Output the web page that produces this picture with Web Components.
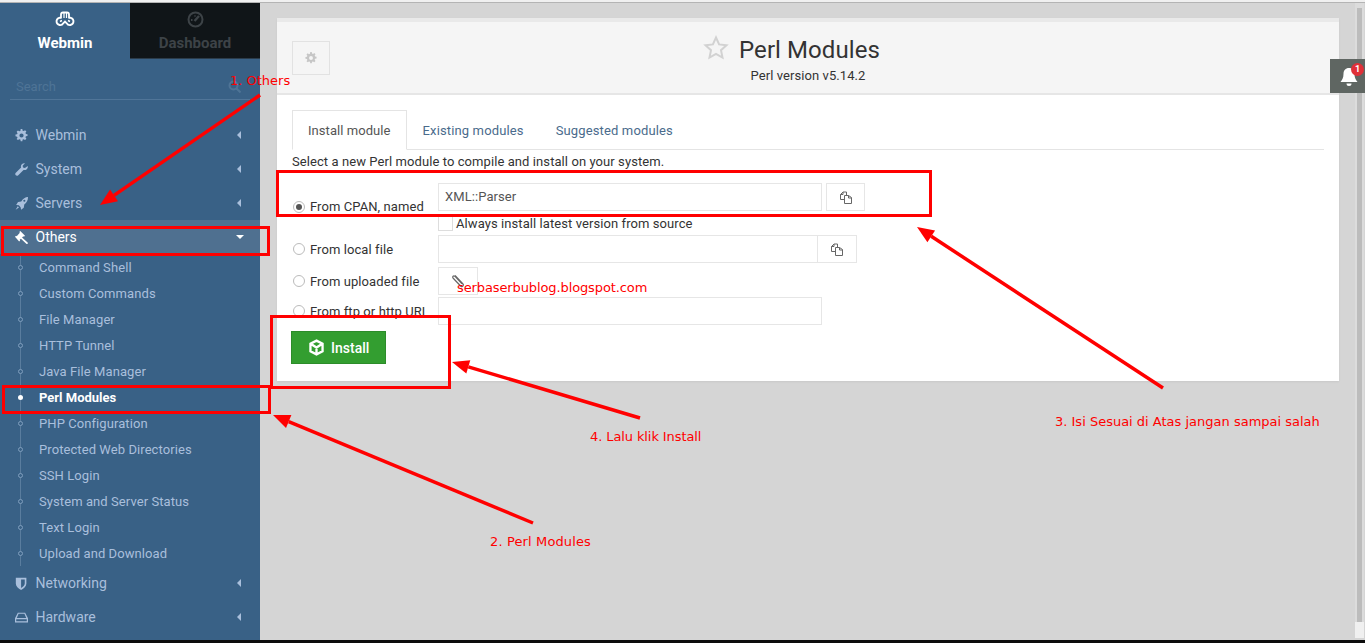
<!DOCTYPE html>
<html>
<head>
<meta charset="utf-8">
<title>Perl Modules</title>
<style>
  html, body { margin: 0; height: 100%; overflow: hidden; }
  body { font-family: Roboto, "Liberation Sans", sans-serif; background: #d5d5d5; }
</style>
</head>
<body>
<wm-app>
  <wm-sidebar slot="side">
    <wm-nav label="Webmin" icon="cog"></wm-nav>
    <wm-nav label="System" icon="wrench"></wm-nav>
    <wm-nav label="Servers" icon="rocket"></wm-nav>
    <wm-nav label="Others" icon="gavel" open></wm-nav>
    <wm-sub-list>
      <wm-sub>Command Shell</wm-sub>
      <wm-sub>Custom Commands</wm-sub>
      <wm-sub>File Manager</wm-sub>
      <wm-sub>HTTP Tunnel</wm-sub>
      <wm-sub>Java File Manager</wm-sub>
      <wm-sub active>Perl Modules</wm-sub>
      <wm-sub>PHP Configuration</wm-sub>
      <wm-sub>Protected Web Directories</wm-sub>
      <wm-sub>SSH Login</wm-sub>
      <wm-sub>System and Server Status</wm-sub>
      <wm-sub>Text Login</wm-sub>
      <wm-sub>Upload and Download</wm-sub>
    </wm-sub-list>
    <wm-nav label="Networking" icon="shield"></wm-nav>
    <wm-nav label="Hardware" icon="hdd"></wm-nav>
  </wm-sidebar>
  <wm-panel slot="main" title="Perl Modules" subtitle="Perl version v5.14.2">
    <wm-tabs></wm-tabs>
    <wm-install-form></wm-install-form>
  </wm-panel>
</wm-app>
<wm-notify></wm-notify>
<wm-annotations></wm-annotations>

<script>
const ICONS = {
  cog: '<path d="M7 0h2l.4 2 1.300.500L12.400 1.400 14 3l-1.100 1.700.500 1.300 2 .400v2.200l-2 .400-.500 1.300 1.100 1.700-1.600 1.600-1.700-1.100-1.300.500-.400 2H7l-.400-2-1.300-.500-1.700 1.100L2 12.400l1.100-1.700-.500-1.300-2-.400V6.800l2-.400.500-1.300L2 3.400 3.600 1.800l1.700 1.100L6.600 2.400zM8 5.400a2.600 2.600 0 1 0 0 5.200 2.600 2.600 0 0 0 0-5.200z" fill-rule="evenodd"/>',
  wrench: '<path d="M15.700 3.600c.300 1.600-.100 3-1.200 4-1.100 1-2.600 1.300-4 .900L4 15c-.800.800-2.200.900-3 .100-.900-.900-.900-2.300 0-3.100l6.500-6.400c-.500-1.400-.200-3 .900-4.100 1-1 2.500-1.400 3.900-1.100L9.400 3.300l.500 2.300 2.300.600z"/>',
  rocket: '<path d="M16 0c.100 3.800-1.300 6.900-4.600 9.300l-.600 4-3.300 2.300-.600-3.100-2.200-2.200-3.300-.600L3.700 6.100l4-.600C10 2 12.600.200 16 0zM11.500 3.300a1.300 1.300 0 1 0 0 2.600 1.300 1.300 0 0 0 0-2.600zM3.400 11.500l1.500 1.500L.800 15.600z" fill-rule="evenodd"/>',
  gavel: '<path d="M6.500 0l5.800 5.800-1.300 1.300-.800-.600-1.500 1.500L15.500 14c.500.500.500 1.200 0 1.600-.400.500-1.100.500-1.600 0L7.300 9.400 5.800 10.900l.600.800-1.300 1.300L0 7.200l1.300-1.300.800.600L6 2.100l-.700-.800z"/>',
  shield: '<path d="M1 1h13v7c0 3.500-3 6-6.500 8C4 14 1 11.500 1 8zM7.500 3v10.500C9.800 12 12 10.300 12 8V3z" fill-rule="evenodd"/>',
  hdd: '<path d="M3.500 2h9L16 9v5H0V9zM4.400 3.500L2.200 8.500h11.600l-2.200-5zM1.500 10v2.500h13V10z" fill-rule="evenodd"/>'
};

function svg(name, size) {
  return `<svg viewBox="0 0 16 16" width="${size}" height="${size}" fill="currentColor">${ICONS[name]}</svg>`;
}

class WmApp extends HTMLElement {
  constructor() {
    super();
    this.attachShadow({ mode: 'open' }).innerHTML = `
      <style>
        :host { display: flex; flex-direction: column; height: 643px; width: 1365px; background: #d5d5d5; }
        .top { height: 2px; background: #f0f0f0; border-bottom: 1px solid #b4b4b4; flex: none; }
        .body { flex: 1; display: flex; min-height: 0; }
        .bottom { height: 3px; background: #0c0c0c; flex: none; }
        .main { flex: 1; padding: 15px 16px 0 17px; min-width: 0; }
        .track { flex: none; width: 5px; margin: 0 1px 2px 0; padding: 0 2px; background: #dcdcdc; display: flex; flex-direction: column; }
        .thumb { flex: 1; background: #bcbcbc; margin-top: 5px; }
        .cap { height: 16px; margin: 0 -2px; background: #f0f0f0; }
      </style>
      <div class="top"></div>
      <div class="body">
        <slot name="side"></slot>
        <div class="main"><slot name="main"></slot></div>
        <div class="track"><div class="thumb"></div><div class="cap"></div></div>
      </div>
      <div class="bottom"></div>`;
  }
}

class WmSidebar extends HTMLElement {
  constructor() {
    super();
    this.attachShadow({ mode: 'open' }).innerHTML = `
      <style>
        :host { display: block; width: 260px; flex: none; background: #396186; color: #a9bfdc; overflow: hidden; }
        .tabs { display: grid; grid-template-columns: 130px 130px; height: 56px; font-size: 15px; font-weight: 700; text-align: center; }
        .tab { display: flex; flex-direction: column; align-items: center; padding-top: 8px; gap: 6px; box-sizing: border-box; }
        .tab.on { color: #fff; }
        .tab.off { background: #101518; color: #3d4347; border-bottom: 1px solid #2b3c4b; }
        .tab svg { display: block; }
        .search { display: flex; align-items: center; justify-content: space-between; margin: 15px 10px 0; height: 25px; padding: 0 9px 0 6px; border-bottom: 1px solid #507598; font-size: 13px; color: #4f7496; }
        nav { padding-top: 18px; }
      </style>
      <div class="tabs">
        <div class="tab on">
          <svg width="20" height="17" viewBox="0 0 20 17" fill="none" stroke="currentColor" stroke-width="1.800">
            <path d="M6 7.500V3.500Q6 1.500 8 1.500H12Q14 1.500 14 3.500V7.500"/>
            <path d="M9 2v5M11.500 2v5" stroke-width="1.200"/>
            <path d="M6 6.500Q2 6.800 1.500 10Q1.500 13.500 4.500 14Q7 14.500 8.500 12L10 10.500L11.500 12Q13 14.500 15.500 14Q18.500 13.500 18.500 10Q18 6.800 14 6.500"/>
            <path d="M5 10.500L7 9.500M15 10.500L13 9.500" stroke-width="1.400"/>
          </svg>
          <span>Webmin</span>
        </div>
        <div class="tab off">
          <svg width="17" height="17" viewBox="0 0 17 17" fill="none" stroke="currentColor" stroke-width="2"><circle cx="8.500" cy="8.500" r="7"/><path d="M7.500 10l4.500-5" stroke-width="2.400"/><path d="M4 9h1.500M8 4.500v1" /></svg>
          <span>Dashboard</span>
        </div>
      </div>
      <div class="search">
        <span>Search</span>
        <svg width="13" height="13" viewBox="0 0 13 13" fill="none" stroke="currentColor" stroke-width="2"><circle cx="5.500" cy="5.500" r="4"/><path d="M8.500 8.500l4 4"/></svg>
      </div>
      <nav><slot></slot></nav>`;
  }
}

class WmNav extends HTMLElement {
  constructor() {
    super();
    const open = this.hasAttribute('open');
    this.attachShadow({ mode: 'open' }).innerHTML = `
      <style>
        :host { display: flex; align-items: center; height: 34px; padding: 0 16px 0 15px; font-size: 14px; box-sizing: border-box; }
        :host([open]) { background: #4f7090; color: #fff; }
        .ic { width: 20.500px; display: flex; }
        .label { flex: 1; }
        .caret { width: 0; height: 0; }
        .left { border-top: 4px solid transparent; border-bottom: 4px solid transparent; border-right: 4px solid currentColor; margin-right: 3px; }
        .down { border-left: 4px solid transparent; border-right: 4px solid transparent; border-top: 4px solid currentColor; }
      </style>
      <span class="ic">${svg(this.getAttribute('icon'), 13)}</span>
      <span class="label">${this.getAttribute('label')}</span>
      <span class="caret ${open ? 'down' : 'left'}"></span>`;
  }
}

class WmSubList extends HTMLElement {
  constructor() {
    super();
    this.attachShadow({ mode: 'open' }).innerHTML = `
      <style>
        :host { display: block; position: relative; }
        .line { position: absolute; left: 20px; top: 0; bottom: 0; width: 1px; background: #5a7d9e; }
      </style>
      <div class="line"></div><slot></slot>`;
  }
}

class WmSub extends HTMLElement {
  constructor() {
    super();
    this.attachShadow({ mode: 'open' }).innerHTML = `
      <style>
        :host { display: flex; align-items: center; position: relative; height: 26px; padding-left: 39px; font-size: 13px; letter-spacing: .08px; color: #a9bfdc; }
        :host([active]) { color: #fff; font-weight: 700; letter-spacing: 0; }
        .dot { position: absolute; left: 18px; top: 11px; width: 3px; height: 3px; border: 1px solid #7f9ebd; border-radius: 50%; background: #396186; }
        :host([active]) .dot { width: 5px; height: 5px; border: 0; background: #fff; }
      </style>
      <span class="dot"></span><slot></slot>`;
  }
}

class WmPanel extends HTMLElement {
  constructor() {
    super();
    this.attachShadow({ mode: 'open' }).innerHTML = `
      <style>
        :host { display: block; background: #fff; border-top: 4px solid #e9e9e9; height: 359px; box-shadow: 0 1px 2px rgba(0,0,0,.06); color: #333; }
        header { position: relative; height: 71px; background: #f5f5f5; border-bottom: 2px solid #e6e6e6; display: flex; flex-direction: column; align-items: center; }
        .cog { position: absolute; left: 15px; top: 19px; width: 36px; height: 32px; border: 1px solid #e2e2e2; display: flex; align-items: center; justify-content: center; color: #c6c6c6; }
        h1 { margin: 12px 0 0 3px; position: relative; font-size: 24px; line-height: 32px; font-weight: 400; letter-spacing: .08px; color: #333; }
        .star { position: absolute; left: -36px; top: 1px; color: #d2d2d2; }
        .sub { font-size: 13px; line-height: 16px; margin-top: 2px; letter-spacing: .08px; color: #333; }
        .content { padding: 15px 15px 0; }
      </style>
      <header>
        <div class="cog">${svg('cog', 12)}</div>
        <h1><svg class="star" width="26" height="25" viewBox="0 0 26 25" fill="none" stroke="currentColor" stroke-width="2"><path d="M13 2.500l3.100 6.900 7.400.800-5.500 5 1.500 7.300-6.500-3.700-6.500 3.700 1.500-7.300-5.500-5 7.400-.800z"/></svg>${this.getAttribute('title')}</h1>
        <div class="sub">${this.getAttribute('subtitle')}</div>
      </header>
      <div class="content"><slot></slot></div>`;
  }
}

class WmTabs extends HTMLElement {
  constructor() {
    super();
    this.attachShadow({ mode: 'open' }).innerHTML = `
      <style>
        :host { display: flex; height: 40px; border-bottom: 1px solid #e4e4e4; font-size: 13px; letter-spacing: .14px; box-sizing: border-box; }
        span { display: block; padding: 0 16px; line-height: 41px; color: #4a6b8c; }
        .on { color: #555; background: #fff; height: 40px; box-sizing: border-box; border: 1px solid #e4e4e4; border-bottom-color: #fff; padding: 0 15px; line-height: 39px; letter-spacing: .06px; }
      </style>
      <span class="on">Install module</span><span>Existing modules</span><span>Suggested modules</span>`;
  }
}

class WmInstallForm extends HTMLElement {
  constructor() {
    super();
    const copy = `<svg width="12" height="13" viewBox="0 0 12 13" fill="none" stroke="#666" stroke-width="1"><path d="M4.500 8.500H.500V3.500L3 1h3.500v3"/><path d="M3 1v2.500H.500"/><path d="M4.500 12.500V4.500H8.500L11.500 6.500V12.500z"/><path d="M8.500 4.500V7H11.500"/></svg>`;
    this.attachShadow({ mode: 'open' }).innerHTML = `
      <style>
        :host { display: block; font-size: 13px; letter-spacing: .08px; color: #333; }
        .intro { line-height: 16px; padding-top: 4px; height: 20px; }
        .row { display: flex; }
        .opt { width: 146px; display: flex; align-items: center; gap: 5px; padding-left: 1px; box-sizing: border-box; white-space: nowrap; overflow: visible; }
        .radio { width: 10px; height: 10px; border: 1px solid #bbb; border-radius: 50%; background: #fff; position: relative; flex: none; }
        .radio.on::after { content: ""; position: absolute; left: 2px; top: 2px; width: 6px; height: 6px; border-radius: 50%; background: #555; }
        .in { height: 28px; box-sizing: border-box; border: 1px solid #e6e6e6; padding: 0 6px; line-height: 26px; color: #555; background: #fff; }
        .btn { height: 28px; width: 39px; box-sizing: border-box; border: 1px solid #e6e6e6; display: flex; align-items: center; justify-content: center; }
        .cpan { margin-top: 9px; height: 33px; }
        .cpan .opt { padding-top: 14px; }
        .always { display: flex; align-items: center; gap: 3px; margin: 0 0 0 146px; height: 15px; line-height: 15px; }
        .box { width: 13px; height: 13px; border: 1px solid #ddd; flex: none; }
        .local { margin-top: 4px; }
        .upload { margin-top: 4px; }
        .ftp { margin-top: 2px; }
        .install { display: inline-flex; align-items: center; gap: 6px; margin-top: 6px; margin-left: -1px; height: 33px; width: 95px; box-sizing: border-box; padding-left: 16px; background: #339e30; border: 1px solid #2c8c2a; color: #fff; font-size: 14px; font-weight: 500; letter-spacing: 0; }
      </style>
      <div class="intro">Select a new Perl module to compile and install on your system.</div>
      <div class="row cpan">
        <div class="opt"><span class="radio on"></span>From CPAN, named</div>
        <div class="in" style="width:384px">XML::Parser</div>
        <div class="btn" style="margin-left:4px">${copy}</div>
      </div>
      <div class="always"><span class="box"></span>Always install latest version from source</div>
      <div class="row local">
        <div class="opt"><span class="radio"></span>From local file</div>
        <div class="in" style="width:380px"></div>
        <div class="btn" style="border-left:0">${copy}</div>
      </div>
      <div class="row upload">
        <div class="opt"><span class="radio"></span>From uploaded file</div>
        <div class="btn" style="width:40px">
          <svg width="14" height="14" viewBox="0 0 14 14" fill="none" stroke="#666" stroke-width="1.200"><path d="M4 1.500l8 8.500c1.300 1.500-.700 3.500-2.200 2.200L2 4c-1-1.200.600-2.800 1.800-1.800l7 7.300"/></svg>
        </div>
      </div>
      <div class="row ftp">
        <div class="opt"><span class="radio"></span>From ftp or http URL</div>
        <div class="in" style="width:384px"></div>
      </div>
      <div class="install">
        <svg width="17" height="17" viewBox="0 0 16 16" fill="none" stroke="#fff" stroke-width="2.200"><path d="M8 1.500l5.700 3v7L8 14.500l-5.700-3v-7zM2.500 4.500L8 8l5.500-3.500M8 8v6"/></svg>
        Install
      </div>`;
  }
}

class WmNotify extends HTMLElement {
  constructor() {
    super();
    this.attachShadow({ mode: 'open' }).innerHTML = `
      <style>
        :host { position: absolute; left: 1330px; top: 59px; width: 35px; height: 34px; background: #5f6662; display: block; }
        svg { position: absolute; left: 9px; top: 8px; }
        b { position: absolute; left: 21px; top: 4px; width: 13px; height: 13px; border-radius: 50%; background: #e03038; color: #fff; font: 700 9px/13px Roboto, sans-serif; text-align: center; }
      </style>
      <svg width="20" height="20" viewBox="0 0 20 20" fill="#fff"><path d="M10 1c-3.500 0-5.500 2.500-5.500 6 0 4-1.500 6-3 8h17c-1.500-2-3-4-3-8 0-3.500-2-6-5.500-6z"/><path d="M7.500 16.500h5a2.500 2.500 0 0 1-5 0z"/></svg>
      <b>1</b>`;
  }
}

// scribbled red markup lying over the screenshot
class WmAnnotations extends HTMLElement {
  constructor() {
    super();
    const arrow = (x1, y1, x2, y2) => {
      const a = Math.atan2(y2 - y1, x2 - x1), l = 17, w = 7;
      const bx = x2 - l * Math.cos(a), by = y2 - l * Math.sin(a);
      const nx = -Math.sin(a) * w, ny = Math.cos(a) * w;
      return `<line x1="${x1}" y1="${y1}" x2="${bx}" y2="${by}"/>
        <polygon stroke="none" fill="#f00" points="${x2},${y2} ${bx + nx},${by + ny} ${bx - nx},${by - ny}"/>`;
    };
    const notes = [
      ['1. Others', 230, 74, 0], ['2. Perl Modules', 490, 535, .13], ['3. Isi Sesuai di Atas jangan sampai salah', 1055, 415, 0],
      ['4. Lalu klik Install', 590, 430, -.1], ['serbaserbublog.blogspot.com', 457, 281, -.11]
    ];
    this.attachShadow({ mode: 'open' }).innerHTML = `
      <style>
        :host { position: absolute; inset: 0; display: block; pointer-events: none; }
        svg { position: absolute; left: 0; top: 0; }
        rect { stroke-width: 3px; }
        span { position: absolute; color: #f00; font: 13px/13px "DejaVu Sans", sans-serif; white-space: nowrap; }
      </style>
      <svg width="1365" height="643" fill="none" stroke="#f00" stroke-width="3.500">
        <rect x="2.500" y="227.500" width="266" height="27"/>
        <rect x="3.500" y="386.500" width="266" height="26"/>
        <rect x="271.500" y="316.500" width="178" height="71"/>
        <rect x="277.500" y="171.500" width="653" height="44"/>
        ${arrow(260, 95, 100, 205)}
        ${arrow(533, 523, 273, 415)}
        ${arrow(1163, 388, 917, 227)}
        ${arrow(640, 418, 452, 362)}
      </svg>
      ${notes.map(([t, x, y, s]) => `<span style="left:${x}px;top:${y}px;letter-spacing:${s}px">${t}</span>`).join('')}`;
  }
}

customElements.define('wm-app', WmApp);
customElements.define('wm-sidebar', WmSidebar);
customElements.define('wm-nav', WmNav);
customElements.define('wm-sub-list', WmSubList);
customElements.define('wm-sub', WmSub);
customElements.define('wm-panel', WmPanel);
customElements.define('wm-tabs', WmTabs);
customElements.define('wm-install-form', WmInstallForm);
customElements.define('wm-notify', WmNotify);
customElements.define('wm-annotations', WmAnnotations);
</script>
</body>
</html>
